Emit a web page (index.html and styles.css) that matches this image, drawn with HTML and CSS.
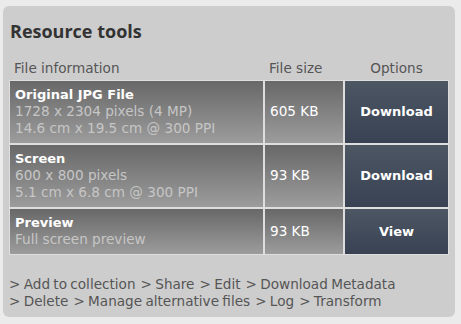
FILE: index.html
```html
<!DOCTYPE html>
<html lang="en">
<head>
  <meta charset="UTF-8" />
  <title>Resource tools</title>
  <link rel="stylesheet" href="styles.css">
</head>
<body>
  <!-- Panneau des outils -->
  <div class="panel">
    <h2>Resource tools</h2>
    <table class="downloads">
      <tr>
        <th class="col-info">File information</th>
        <th class="col-size">File size</th>
        <th class="col-options">Options</th>
      </tr>
      <tr>
        <td class="info">
          <strong>Original JPG File</strong>
          <span>1728 x 2304 pixels (4 MP)</span>
          <span>14.6 cm x 19.5 cm @ 300 PPI</span>
        </td>
        <td class="size">605 KB</td>
        <td class="button"><a href="#">Download</a></td>
      </tr>
      <tr>
        <td class="info">
          <strong>Screen</strong>
          <span>600 x 800 pixels</span>
          <span>5.1 cm x 6.8 cm @ 300 PPI</span>
        </td>
        <td class="size">93 KB</td>
        <td class="button"><a href="#">Download</a></td>
      </tr>
      <tr>
        <td class="info">
          <strong>Preview</strong>
          <span>Full screen preview</span>
        </td>
        <td class="size">93 KB</td>
        <td class="button"><a href="#">View</a></td>
      </tr>
    </table>

    <ul class="links">
      <li><a href="#">&gt; Add to collection</a></li>
      <li><a href="#">&gt; Share</a></li>
      <li><a href="#">&gt; Edit</a></li>
      <li><a href="#">&gt; Download Metadata</a></li>
      <li><a href="#">&gt; Delete</a></li>
      <li><a href="#">&gt; Manage alternative files</a></li>
      <li><a href="#">&gt; Log</a></li>
      <li><a href="#">&gt; Transform</a></li>
    </ul>
  </div>
</body>
</html>
```

FILE: styles.css
```css
* {
  margin: 0;
  padding: 0;
  box-sizing: border-box;
}

body {
  background-color: #ebebeb;
  font-family: 'DejaVu Sans', sans-serif;
  font-size: 13.6px;
  color: #555;
  padding: 6px 6px 0 3px;
}

.panel {
  width: 452px;
  height: 311px;
  background-color: #cdcdcd;
  border-radius: 6px;
  padding: 14px 6px 6px 6px;
}

.panel h2 {
  font-family: 'Open Sans', sans-serif;
  font-size: 18px;
  line-height: 22px;
  font-weight: bold;
  color: #333;
  padding-left: 1px;
  margin-bottom: 16px;
}

.downloads {
  width: 440px;
  border-collapse: separate;
  border-spacing: 0;
}

.downloads th {
  font-weight: normal;
  text-align: left;
  height: 22px;
  line-height: 17px;
  padding: 0 5px 2px 5px;
  color: #555;
}

.downloads th.col-options {
  text-align: center;
}

.col-info {
  width: 255px;
}

.col-size {
  width: 80px;
}

.downloads td {
  border: 1px solid #dedede;
  background: linear-gradient(#686868, #9c9c9c);
  line-height: 17px;
  padding: 5px 5px 6px 5px;
  color: #fff;
}

.info strong {
  display: block;
  font-size: 13px;
  color: #fff;
}

.info span {
  display: block;
  color: #c6c6c6;
}

.downloads td.button {
  background: linear-gradient(#4d5663, #384253);
  text-align: center;
}

.button a {
  font-size: 13px;
  color: #fff;
  font-weight: bold;
  text-decoration: none;
}

.links {
  list-style: none;
  display: flex;
  flex-wrap: wrap;
  column-gap: 5px;
  margin-top: 21px;
  line-height: 17px;
}

.links a {
  color: #555;
  text-decoration: none;
  word-spacing: -1px;
}
```
